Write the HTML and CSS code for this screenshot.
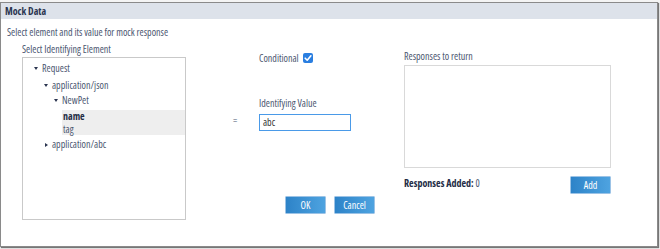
FILE: index.html
```html
<!DOCTYPE html>
<html>
<head>
<meta charset="utf-8">
<link rel="stylesheet" href="styles.css">
</head>
<body>
<div class="backdrop">
  <div class="dialog">
    <div class="dlg-head">Mock Data</div>
    <div class="dlg-body">
      <div class="intro">Select element and its value for mock response</div>
      <div class="cols">
        <div class="col-left">
          <div class="label">Select Identifying Element</div>
          <div class="tree">
            <div class="node lvl1"><span class="caret down"></span>Request</div>
            <div class="node lvl2"><span class="caret down"></span>application/json</div>
            <div class="node lvl3"><span class="caret down"></span>NewPet</div>
            <div class="leaves">
              <div class="leaf sel">name</div>
              <div class="leaf">tag</div>
            </div>
            <div class="node lvl2 abc"><span class="caret right"></span>application/abc</div>
          </div>
        </div>
        <div class="col-eq">=</div>
        <div class="col-mid">
          <div class="cond">Conditional <span class="check"><svg width="10" height="10" viewBox="0 0 10 10"><path d="M2.2 5.2 L4.2 7.2 L7.9 2.8" fill="none" stroke="#fff" stroke-width="1.6" stroke-linecap="round" stroke-linejoin="round"/></svg></span></div>
          <div class="label idv">Identifying Value</div>
          <div class="input">abc</div>
          <div class="footer">
            <button class="btn">OK</button>
            <button class="btn">Cancel</button>
          </div>
        </div>
        <div class="col-right">
          <div class="label">Responses to return</div>
          <div class="textarea"></div>
          <div class="added-row">
            <div class="added"><b>Responses Added:</b> 0</div>
            <button class="btn">Add</button>
          </div>
        </div>
      </div>
    </div>
  </div>
</div>
</body>
</html>
```
FILE: styles.css
```css
* { box-sizing: border-box; }
html, body { margin: 0; padding: 0; }
body {
  width: 660px;
  height: 249px;
  overflow: hidden;
  background: #ffffff;
  font-family: "Open Sans", Roboto, sans-serif;
  font-stretch: 80%;
  font-size: 10px;
  color: #4b5670;
}
.backdrop {
  padding-top: 2px;
  height: 249px;
  background: #f4f4f4;
}
.dialog {
  width: 658px;
  height: 245px;
  background: #fff;
  border: 1px solid #8a8a8a;
  box-shadow: 1px 1px 1px #777;
}
.dlg-head {
  height: 16px;
  background: #dde2ea;
  font-weight: bold;
  color: #2b3550;
  padding: 2px 0 0 4px;
  line-height: 12px;
}
.dlg-body {
  padding: 7px 0 0 6px;
}
.intro { line-height: 12px; }
.cols {
  display: flex;
  margin-top: 5px;
}
.label { line-height: 12px; }
.col-left {
  margin-left: 15px;
  width: 164px;
}
.tree {
  margin-top: 2px;
  height: 163px;
  border: 1px solid #c9c9c9;
  padding-top: 3px;
}
.node {
  display: flex;
  align-items: center;
  height: 15px;
  line-height: 15px;
}
.lvl1 { padding-left: 11px; margin-bottom: 2px; }
.lvl2 { padding-left: 21px; }
.lvl3 { padding-left: 31px; }
.caret {
  display: inline-block;
  width: 0; height: 0;
  margin-right: 4px;
}
.caret.down {
  border-left: 2.5px solid transparent;
  border-right: 2.5px solid transparent;
  border-top: 3px solid #2b3550;
}
.caret.right {
  border-top: 2.5px solid transparent;
  border-bottom: 2.5px solid transparent;
  border-left: 3px solid #2b3550;
  margin-left: 1px;
}
.leaves {
  margin-top: 2px;
  margin-left: 39px;
  background: #eeeeee;
  padding: 0 0 0 1px;
}
.leaf { line-height: 12.5px; }
.leaf.sel { font-weight: bold; color: #232c45; }
.abc { margin-top: 2px; }
.col-eq {
  width: 73px;
  padding-top: 71px;
  padding-left: 47px;
  line-height: 12px;
}
.col-mid {
  width: 145px;
}
.cond {
  display: flex;
  align-items: center;
  gap: 4px;
  height: 12px;
  margin-top: 9px;
}
.check {
  width: 10px; height: 10px;
  border-radius: 2px;
  background: #2a7ee0;
  display: inline-flex;
}
.idv { margin-top: 33px; }
.input {
  margin-top: 5px;
  width: 92px;
  height: 17px;
  border: 1.5px solid #4a9ae8;
  padding: 1px 3px;
  line-height: 12px;
  color: #333;
}
.footer {
  display: flex;
  gap: 8px;
  margin-top: 65px;
  margin-left: 26px;
}
.btn {
  width: 41px;
  height: 18px;
  border: 1px solid #9cc3e6;
  border-radius: 1px;
  background: linear-gradient(to right, #2d83c8, #4ea3e0);
  color: #fff;
  font-family: "Open Sans", Roboto, sans-serif;
  font-stretch: 80%;
  font-size: 10px;
  padding: 0;
}
.col-right {
  width: 207px;
  margin-top: 7px;
}
.textarea {
  margin-top: 3px;
  height: 103px;
  border: 1px solid #d9d9d9;
}
.added-row {
  display: flex;
  justify-content: space-between;
  margin-top: 8px;
}
.added { line-height: 12px; margin-top: 1px; }
.added b { color: #232c45; }
```
